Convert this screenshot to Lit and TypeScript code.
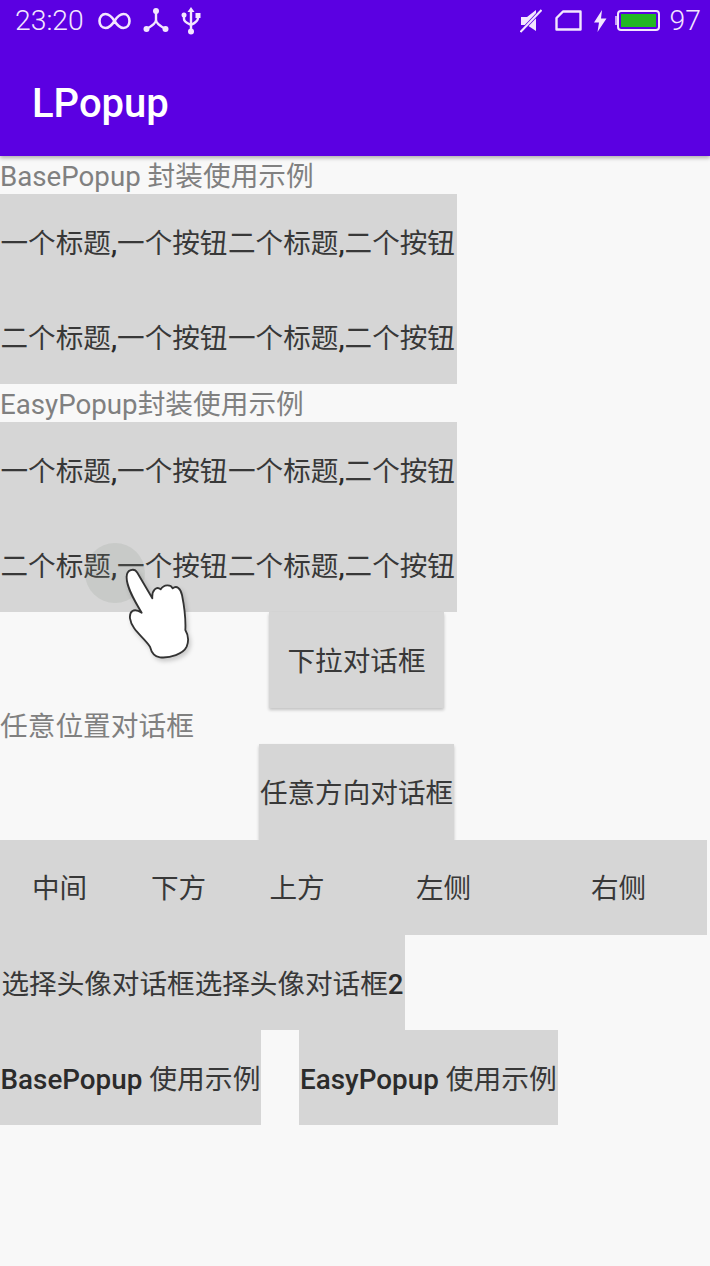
import { LitElement, html, css, svg } from "lit";
import { customElement } from "lit/decorators.js";

/* CJK runs stay at regular weight while Latin runs use the button's medium weight */
const runs = (text: string) =>
  html`<span class="txt">${text.match(/[\u4e00-\u9fff]+|[^\u4e00-\u9fff]+/g)!.map((part) =>
    /[\u4e00-\u9fff]/.test(part) ? html`<span class="cjk">${part}</span>` : part
  )}</span>`;

const statusLeft = svg`
  <svg class="ic" width="33" height="20" viewBox="0 0 33 20" fill="none" stroke="currentColor" stroke-width="2.6">
    <path d="M16.5 10C13 4.5 10.5 3 7.5 3C4 3 1.5 6 1.5 10S4 17 7.5 17C10.5 17 13 15.5 16.5 10C20 4.5 22.500 3 25.500 3C29 3 31.500 6 31.500 10S29 17 25.500 17C22.500 17 20 15.500 16.500 10Z"/>
  </svg>
  <svg class="ic" width="26" height="25" viewBox="0 0 26 25" fill="none" stroke="currentColor" stroke-width="2.400">
    <path d="M13 3V12C13 15 9 18 3.500 21M13 12C13 15 17 18 22.500 21"/>
    <g fill="currentColor" stroke="none"><circle cx="13" cy="3" r="3"/><circle cx="3.500" cy="21" r="3"/><circle cx="22.500" cy="21" r="3"/></g>
  </svg>
  <svg class="ic" width="20" height="28" viewBox="0 0 20 28" fill="none" stroke="currentColor" stroke-width="2.400">
    <path d="M10 3V24M3 9V12C3 15 6 16 10 18C14 16 17 14 17 11V9"/>
    <g fill="currentColor" stroke="none"><path d="M10 0L13.500 5H6.500Z"/><circle cx="10" cy="24.500" r="3"/><circle cx="3" cy="8" r="2.500"/><rect x="14.500" y="6" width="5" height="5"/></g>
  </svg>`;

const statusRight = svg`
  <svg class="ic" width="22" height="24" viewBox="0 0 22 24" fill="currentColor">
    <path d="M1 8H7L16 1V22L7 16H1Z"/>
    <path d="M0.500 23L21.500 1" stroke="#5b00e2" stroke-width="3.600"/>
    <path d="M0.500 23L21.500 1" stroke="currentColor" stroke-width="2"/>
  </svg>
  <svg class="ic sim" width="27" height="21" viewBox="0 0 27 21" fill="none" stroke="currentColor" stroke-width="2.400">
    <path d="M8 1.500H25.500V19.500H1.500V8Z" stroke-linejoin="round"/>
  </svg>
  <svg class="ic bolt" width="14" height="22" viewBox="0 0 14 22" fill="currentColor">
    <path d="M9 0L1 12.500H6L4.500 22L13.500 8.500H8Z"/>
  </svg>
  <span class="battery"><span class="cell"></span></span>`;

const hand = svg`
  <svg class="hand" width="160" height="140" viewBox="0 0 480 420" aria-hidden="true">
    <path fill="#fff" stroke="#333" stroke-width="5.500" stroke-linejoin="round"
      d="M200 140C200 120 222 112 232 128L277 205C275 180 290 168 302 178C312 163 332 163 338 175C350 165 362 175 366 195C372 225 378 260 376 300C385 315 388 330 380 350C370 372 330 385 300 382C285 380 275 370 270 350C250 320 215 300 210 265C208 245 220 232 245 248C225 215 198 170 200 140Z"/>
  </svg>`;

@customElement("app-root")
export class AppRoot extends LitElement {
  static styles = css`
    :host {
      display: block;
      position: relative;
      width: 710px;
      height: 1266px;
      overflow: hidden;
      background: #f8f8f8;
      font-family: Roboto, "Noto Sans CJK SC", sans-serif;
      font-size: 27.6px;
      color: #2b2b2b;
    }
    .bar {
      background: #5b00e2;
      color: #f3e6ff;
      box-shadow: 0 2px 4px rgba(0, 0, 0, 0.3);
      height: 156px;
    }
    .status {
      height: 41px;
      display: flex;
      align-items: center;
      justify-content: space-between;
      padding: 0 9px 0 15px;
      font-size: 28.300px;
      font-weight: 300;
    }
    .group { display: flex; align-items: center; gap: 12px; }
    .group.right { gap: 0; }
    .ic { display: block; flex: none; }
    .sim { margin-left: 13px; }
    .bolt { margin-left: 11px; }
    .battery {
      position: relative;
      box-sizing: border-box;
      width: 43px;
      height: 21px;
      margin: 0 10px 0 10px;
      border: 2px solid currentColor;
      border-radius: 4px;
      padding: 2px;
      display: block;
    }
    .battery::before {
      content: "";
      position: absolute;
      left: -4px;
      top: 4px;
      width: 2px;
      height: 9px;
      background: currentColor;
      opacity: 0.7;
    }
    .cell { display: block; height: 100%; background: #22b822; }
    .time { margin-right: 2px; }
    .title {
      padding: 31px 0 0 32px;
      font-size: 40px;
      font-weight: 500;
      color: #fff;
      line-height: 64px;
    }
    main { display: flex; flex-direction: column; align-items: flex-start; }
    .label {
      height: 38px;
      line-height: 42px;
      color: #808080;
      font-size: 27.700px;
      white-space: nowrap;
    }
    .label.third { height: 36px; line-height: 38px; }
    .grid {
      display: grid;
      grid-template-columns: 228px 229px;
      grid-auto-rows: 95px;
    }
    .btn {
      box-sizing: border-box;
      display: flex;
      align-items: center;
      justify-content: center;
      height: 95px;
      padding-bottom: 3px;
      background: #d6d6d6;
      font-weight: 500;
      white-space: nowrap;
    }
    .grid .btn { padding-bottom: 1px; }
    .grid .btn:nth-child(even) { padding-right: 2px; }
    .low { padding-bottom: 1px; }
    .pair .btn { font-size: 27.800px; }
    .txt { white-space: pre; }
    .cjk { font-weight: 400; color: #383838; }
    .center {
      display: flex;
      justify-content: center;
      align-self: stretch;
      padding-left: 3px;
    }
    .raised { box-shadow: 0 2px 3px rgba(0, 0, 0, 0.22); height: 96px; }
    .w175 { width: 175px; }
    .w195 { width: 195px; }
    .five {
      display: grid;
      grid-template-columns: 119px 119px 118px 175px 175px;
      background: #d6d6d6;
      width: 707px;
    }
    .w405 { width: 405px; }
    .pair { display: flex; gap: 38px; }
    .w261 { width: 261px; }
    .w259 { width: 259px; }
    .touch {
      position: absolute;
      left: 85px;
      top: 543px;
      width: 60px;
      height: 60px;
      border-radius: 50%;
      background: rgba(130, 140, 130, 0.16);
    }
    .hand {
      position: absolute;
      left: 60px;
      top: 530px;
      filter: drop-shadow(2px 3px 2px rgba(0, 0, 0, 0.18));
    }
  `;

  private btn(text: string, cls = "") {
    return html`<div class="btn ${cls}">${runs(text)}</div>`;
  }

  render() {
    return html`
      <header class="bar">
        <div class="status">
          <div class="group"><span class="time">23:20</span>${statusLeft}</div>
          <div class="group right">${statusRight}<span>97</span></div>
        </div>
        <div class="title">LPopup</div>
      </header>
      <main>
        <div class="label">BasePopup 封装使用示例</div>
        <div class="grid">
          ${this.btn("一个标题,一个按钮")}${this.btn("二个标题,二个按钮")}
          ${this.btn("二个标题,一个按钮")}${this.btn("一个标题,二个按钮")}
        </div>
        <div class="label">EasyPopup封装使用示例</div>
        <div class="grid">
          ${this.btn("一个标题,一个按钮")}${this.btn("一个标题,二个按钮")}
          ${this.btn("二个标题,一个按钮")}${this.btn("二个标题,二个按钮")}
        </div>
        <div class="center">${this.btn("下拉对话框", "raised w175")}</div>
        <div class="label third">任意位置对话框</div>
        <div class="center">${this.btn("任意方向对话框", "raised w195")}</div>
        <div class="five">
          ${["中间", "下方", "上方", "左侧", "右侧"].map((t) => this.btn(t))}
        </div>
        ${this.btn("选择头像对话框选择头像对话框2", "w405 low")}
        <div class="pair">
          ${this.btn("BasePopup 使用示例", "w261 low")}${this.btn("EasyPopup 使用示例", "w259 low")}
        </div>
      </main>
      <div class="touch"></div>
      ${hand}
    `;
  }
}
